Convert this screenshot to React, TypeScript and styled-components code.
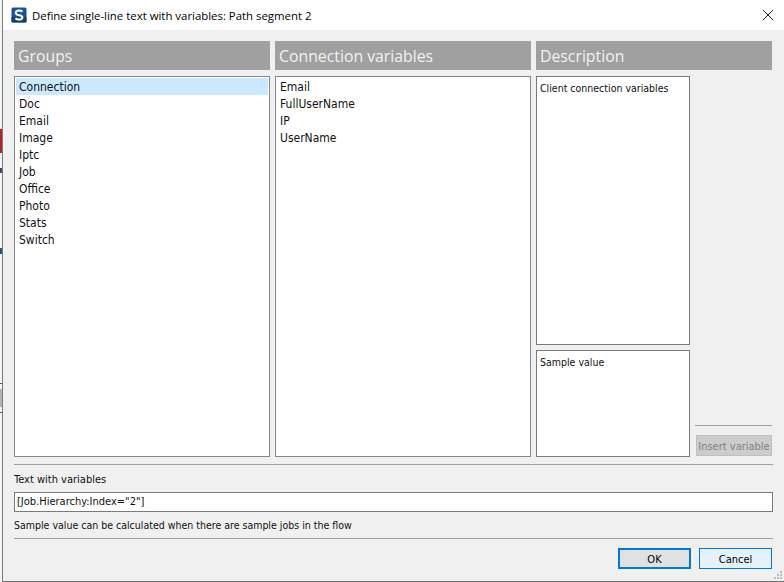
import React from "react";
import styled, { createGlobalStyle } from "styled-components";

const Global = createGlobalStyle`
  html, body { margin: 0; padding: 0; background: #f0f0f0; }
  body { font-family: "DejaVu Sans Condensed", "DejaVu Sans", sans-serif; font-stretch: condensed; font-size: 10.5px; color: #111; }
  * { box-sizing: border-box; }
`;

const Screen = styled.div`
  width: 784px; height: 582px; display: flex; overflow: hidden; background: #fff;
`;
const BackdropStrip = styled.div`
  width: 2px; flex: none; background: #f4f4f4; display: flex; flex-direction: column;
`;
const BackdropMark = styled.div<{ $top: number; $h: number; $c: string }>`
  margin-top: ${(p) => p.$top}px; height: ${(p) => p.$h}px; background: ${(p) => p.$c}; flex: none;
`;
const Dialog = styled.div`
  flex: 1; display: flex; flex-direction: column; border-left: 1px solid #7d7d7d; border-bottom: 1px solid #6f6f6f; background: #f0f0f0; position: relative;
`;
const TitleBar = styled.div`
  height: 30px; flex: none; background: #fff; display: flex; align-items: center; padding: 0 11px 0 8px; gap: 5px;
`;
const TitleText = styled.span`
  flex: 1; font-family: "Open Sans", sans-serif; font-stretch: normal; font-size: 11.4px; color: #000; white-space: nowrap;
`;
const Body = styled.div`
  flex: 1; display: flex; flex-direction: column; padding: 11px 11px 0 11px;
`;
const Columns = styled.div`
  display: grid; grid-template-columns: 256px 256px 236px; column-gap: 5px; height: 416px;
`;
const Column = styled.div`
  display: flex; flex-direction: column; gap: 6px; min-height: 0;
`;
const Header = styled.div`
  height: 29px; flex: none; background: #a0a0a0; color: #f2f2f2; font-family: "Open Sans", sans-serif; font-stretch: normal; font-size: 15.8px; padding-left: 4px; display: flex; align-items: center;
`;
const ListBox = styled.div`
  flex: 1; background: #fff; border: 1px solid #828790; padding: 1px; display: flex; flex-direction: column; font-size: 12px;
`;
const ListItem = styled.div<{ $selected?: boolean }>`
  height: 17px; line-height: 18px; padding-left: 3px; background: ${(p) => (p.$selected ? "#cce8ff" : "transparent")}; white-space: nowrap;
`;
const DescriptionArea = styled.div`
  flex: 1; display: grid; grid-template-columns: 154px 1fr; column-gap: 5px; min-height: 0;
`;
const TextStack = styled.div`
  display: flex; flex-direction: column; gap: 5px; min-height: 0;
`;
const TextPanel = styled.div<{ $h?: number }>`
  background: #fff; border: 1px solid #7a7a7a; padding: 5px 3px; white-space: nowrap;
  ${(p) => (p.$h ? `height: ${p.$h}px; flex: none;` : "flex: 1;")}
`;
const InsertArea = styled.div`
  display: flex; flex-direction: column; justify-content: flex-end; padding-bottom: 1px; gap: 9px;
`;
const Rule = styled.div`
  height: 1px; flex: none; background: #a0a0a0;
`;
const InsertButton = styled.div`
  width: 76px; height: 21px; margin-left: 1px; padding-top: 1px; background: #cccccc; border: 1px solid #bfbfbf; color: #838383; font-size: 11px; display: flex; align-items: center; justify-content: center; white-space: nowrap;
`;
const SectionRule = styled(Rule)`
  margin-top: 7px;
`;
const Label = styled.div`
  margin-top: 7px; height: 16px; line-height: 16px; font-size: 11px;
`;
const TextField = styled.div`
  margin-top: 4px; height: 20px; background: #fff; border: 1px solid #7a7a7a; padding-left: 2px; line-height: 18px; font-size: 11px; white-space: nowrap;
`;
const Hint = styled.div`
  margin-top: 5px; height: 16px; line-height: 16px; white-space: nowrap;
`;
const LastRule = styled(Rule)`
  margin-top: 5px;
`;
const Footer = styled.div`
  display: flex; justify-content: flex-end; gap: 8px; margin-top: 9px; padding-right: 1px;
`;
const DialogButton = styled.div<{ $primary?: boolean }>`
  width: 73px; height: 21px; padding-top: 1px; font-size: 11px; display: flex; align-items: center; justify-content: center;
  background: ${(p) => (p.$primary ? "#e1e1e1" : "#e5f1fb")};
  border: ${(p) => (p.$primary ? "2px" : "1px")} solid #0078d7;
  color: #000;
`;
const Grip = styled.svg`
  position: absolute; right: 1px; bottom: 1px;
`;

const groups = ["Connection", "Doc", "Email", "Image", "Iptc", "Job", "Office", "Photo", "Stats", "Switch"];
const vars = ["Email", "FullUserName", "IP", "UserName"];

export default function App() {
  return (
    <Screen>
      <Global />
      <BackdropStrip>
        <BackdropMark $top={129} $h={24} $c="#b5202e" />
        <BackdropMark $top={15} $h={5} $c="#3a4a5c" />
        <BackdropMark $top={75} $h={6} $c="#2a4f90" />
        <BackdropMark $top={129} $h={1} $c="#555555" />
        <BackdropMark $top={5} $h={18} $c="#b4b4b4" />
        <BackdropMark $top={5} $h={1} $c="#555555" />
      </BackdropStrip>
      <Dialog>
        <TitleBar>
          <svg width="16" height="16" viewBox="0 0 16 16">
            <rect x="0.5" y="0.5" width="15" height="15" rx="1.5" fill="#17568f" />
            <rect x="0.5" y="10" width="15" height="5.5" rx="1" fill="#123f6e" />
            <path d="M11.5 4.6 C10.6 3.9 9.4 3.5 8 3.5 C6 3.5 4.7 4.5 4.7 6 C4.7 9 11.4 7.6 11.4 10.2 C11.4 11.7 9.9 12.6 8 12.6 C6.5 12.6 5.2 12.1 4.4 11.3" fill="none" stroke="#fff" strokeWidth="2" />
          </svg>
          <TitleText>Define single-line text with variables: Path segment 2</TitleText>
          <svg width="10" height="10" viewBox="0 0 10 10">
            <path d="M0 0 L10 10 M10 0 L0 10" stroke="#222" strokeWidth="1" fill="none" />
          </svg>
        </TitleBar>
        <Body>
          <Columns>
            <Column>
              <Header>Groups</Header>
              <ListBox>
                {groups.map((g, i) => (
                  <ListItem key={g} $selected={i === 0}>{g}</ListItem>
                ))}
              </ListBox>
            </Column>
            <Column>
              <Header>Connection variables</Header>
              <ListBox>
                {vars.map((v) => (
                  <ListItem key={v}>{v}</ListItem>
                ))}
              </ListBox>
            </Column>
            <Column>
              <Header>Description</Header>
              <DescriptionArea>
                <TextStack>
                  <TextPanel>Client connection variables</TextPanel>
                  <TextPanel $h={107}>Sample value</TextPanel>
                </TextStack>
                <InsertArea>
                  <Rule />
                  <InsertButton>Insert variable</InsertButton>
                </InsertArea>
              </DescriptionArea>
            </Column>
          </Columns>
          <SectionRule />
          <Label>Text with variables</Label>
          <TextField>[Job.Hierarchy:Index="2"]</TextField>
          <Hint>Sample value can be calculated when there are sample jobs in the flow</Hint>
          <LastRule />
          <Footer>
            <DialogButton $primary>OK</DialogButton>
            <DialogButton>Cancel</DialogButton>
          </Footer>
        </Body>
        <Grip width="10" height="10" viewBox="0 0 10 10">
          <g fill="#bdbdbd">
            <rect x="7" y="1" width="2" height="2" />
            <rect x="4" y="4" width="2" height="2" />
            <rect x="7" y="4" width="2" height="2" />
            <rect x="1" y="7" width="2" height="2" />
            <rect x="4" y="7" width="2" height="2" />
            <rect x="7" y="7" width="2" height="2" />
          </g>
        </Grip>
      </Dialog>
    </Screen>
  );
}
